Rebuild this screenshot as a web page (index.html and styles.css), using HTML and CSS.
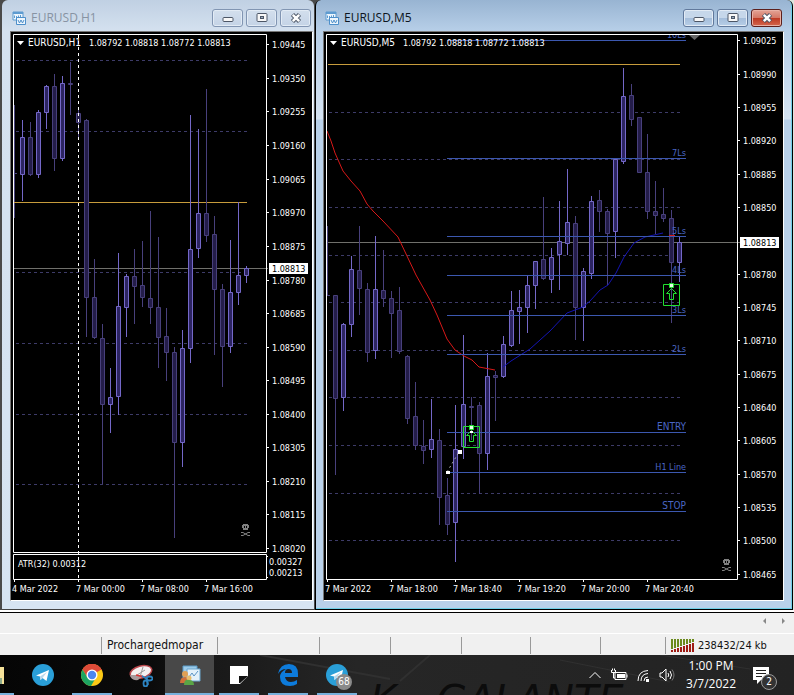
FILE: index.html
```html
<!DOCTYPE html>
<html lang="en">
<head>
<meta charset="utf-8">
<meta name="viewport" content="width=device-width, initial-scale=1">
<title>EURUSD charts</title>
<link rel="stylesheet" href="styles.css">
</head>
<body>
<svg class="defs" width="0" height="0" aria-hidden="true">
  <symbol id="chart-icon" viewBox="0 0 15 15">
    <path d="M1 1h10v8H1z" fill="#eef6fd" stroke="#5d9bd0"/>
    <path d="M1 1h10v2H1z" fill="#5d9bd0"/>
    <path d="M2.500 7V4.500M4.500 7.500V5M6.500 6V4.500M8.500 6V4" stroke="#5d9bd0"/>
    <path d="M4.500 6.500h9v7h-9z" fill="#eef6fd" stroke="#4d8fca"/>
    <path d="M6 9l1.500 3L9 9l1.500 3L12 9" fill="none" stroke="#4d8fca"/>
  </symbol>
  <symbol id="min-icon" viewBox="0 0 12 12"><rect x="1" y="5.500" width="10" height="4" rx="1" fill="#f8f8f8" stroke="#4c5666"/></symbol>
  <symbol id="max-icon" viewBox="0 0 12 12"><rect x="1" y="1.500" width="10" height="8" rx="1" fill="#f8f8f8" stroke="#4c5666"/><rect x="4.500" y="4.500" width="3" height="2" fill="#9ab" stroke="#4c5666"/></symbol>
  <symbol id="close-icon" viewBox="0 0 12 12"><path d="M2.500 2.500l7 7M9.500 2.500l-7 7" stroke="#4c5666" stroke-width="4.500"/><path d="M2.800 2.800l6.400 6.400M9.200 2.800l-6.400 6.400" stroke="#fff" stroke-width="2.500"/></symbol>
  <symbol id="skull" viewBox="0 0 9 13">
    <path class="bone" d="M2 0h5v1h1v3H7v2H2V4H1V1h1z"/><path class="socket" d="M3 2h1v2H3zM5 2h1v2H5z"/>
    <path class="bones" d="M0 8.500h2l5 3h2M9 8.500H7l-5 3H0"/>
  </symbol>
  <symbol id="plane" viewBox="0 0 24 24">
    <circle cx="12" cy="12" r="11" fill="#2a9fd8"/>
    <path d="M5 12.500L18 7l-2.500 11-4-3-2 2-.5-3.500z" fill="#fff"/><path d="M9 13.500L16 9l-4.500 6-2 2z" fill="#b9d9ec"/>
  </symbol>
</svg>

<main class="workspace">
  <section class="window" aria-label="EURUSD,H1">
    <header class="titlebar">
      <svg class="title-icon" aria-hidden="true"><use href="#chart-icon"/></svg>
      <h2 class="title">EURUSD,H1</h2>
      <button class="ctl" aria-label="Minimize"><svg><use href="#min-icon"/></svg></button>
      <button class="ctl" aria-label="Maximize"><svg><use href="#max-icon"/></svg></button>
      <button class="ctl" aria-label="Close"><svg><use href="#close-icon"/></svg></button>
    </header>
    <div class="client">
      <svg class="chart" id="h1" viewBox="11 32 301 568">
        <g id="h1-back"></g>
        <path class="wick-dim" d="M14.500 105v113M14 173.500h3"/>
        <path class="gold" d="M14 202.500h233"/>
        <path class="price-line" d="M14 268.500h254"/>
        <g id="h1-candles"></g>
        <path class="day" d="M78.500 35v544"/>
        <path class="frame" d="M13.500 34.500h253v518h-253zM13.500 554.500h253v25h-253zM14.500 580v2M78.500 580v2M142.500 580v2M206.500 580v2M267 556.500h1M267 577.500h1"/>
        <path d="M17 41h7l-3.500 4z" fill="#fff"/>
        <text class="caps" x="28" y="46">EURUSD,H1</text>
        <text x="89" y="46">1.08792 1.08818 1.08772 1.08813</text>
        <text x="18" y="567">ATR(32) 0.00312</text>
        <text x="269" y="565">0.00327</text>
        <text x="269" y="576">0.00213</text>
        <g id="h1-axis"></g>
        <use href="#skull" x="241" y="524" width="9" height="13"/>
      </svg>
    </div>
  </section>

  <section class="window active" aria-label="EURUSD,M5">
    <header class="titlebar">
      <svg class="title-icon" aria-hidden="true"><use href="#chart-icon"/></svg>
      <h2 class="title">EURUSD,M5</h2>
      <button class="ctl" aria-label="Minimize"><svg><use href="#min-icon"/></svg></button>
      <button class="ctl" aria-label="Maximize"><svg><use href="#max-icon"/></svg></button>
      <button class="ctl close" aria-label="Close"><svg><use href="#close-icon"/></svg></button>
    </header>
    <div class="client">
      <svg class="chart" id="m5" viewBox="324 32 459 568">
        <clipPath id="m5-area"><path d="M326 35h411v545H326z"/></clipPath>
        <g id="m5-back"></g>
        <path class="gold" d="M328 64.500h352"/>
        <path class="price-line" d="M327 242.500h413"/>
        <path class="wick-dim" d="M327.500 226v70M327 295.500h3"/>
        <g id="m5-candles"></g>
        <path class="ma-red" d="M327 131l4 10 4 12 8 18 8 10 9 10 7 13 6 7 10 10 15 16 9 19 9 19 14 25 7 15 10 24 8 11 9 6 8 4 7 7 16 3M669 235.500h6"/>
        <path class="ma-blue" d="M503 367l8-6 19-12 20-18 17-18 8-3 8-3 7-6 10-11 8-5 8-12 8-16 10-14 11-6 18-4"/>
        <path class="trend" d="M447 472l12-20"/>
        <g id="m5-levels" clip-path="url(#m5-area)"></g>
        <g class="signal">
          <path d="M663.500 284.500h16v21h-16zM671.500 288.500l5 5h-3v6h-4v-6h-3z"/>
          <path d="M463.500 426.500h16v21h-16zM471.500 430.500l5 5h-3v6h-4v-6h-3z"/>
          <path class="dot" d="M669.500 283.500h4v4h-4zM469.500 425.500h4v4h-4z"/>
          <path d="M458 450h4v4h-4zM446 471h4v3h-4zM470 431h3v2h-3z" fill="#fff" stroke="none"/>
        </g>
        <path class="frame" d="M326.500 34.500h411v545h-411zM327.500 580v2M391.500 580v2M455.500 580v2M519.500 580v2M583.500 580v2M647.500 580v2"/>
        <path d="M689 35h11l-5.500 5z" fill="#666"/>
        <path d="M330 41h7l-3.500 4z" fill="#fff"/>
        <text class="caps" x="341" y="46">EURUSD,M5</text>
        <text x="403" y="46">1.08792 1.08818 1.08772 1.08813</text>
        <g id="m5-axis"></g>
        <use href="#skull" x="722" y="559" width="9" height="13"/>
      </svg>
    </div>
  </section>
</main>

<div class="tabstrip">
  <button aria-label="Scroll left"><svg viewBox="0 0 5 8"><path d="M4 1v6L1 4z"/></svg></button>
  <button aria-label="Scroll right"><svg viewBox="0 0 5 8"><path d="M1 1v6l3-3z"/></svg></button>
</div>

<div class="statusbar">
  <span></span><span class="profile">Prochargedmopar</span><span></span><span></span><span></span><span></span><span></span><span></span>
  <span class="traffic">
    <svg viewBox="0 0 24 13" aria-hidden="true">
      <path d="M1 0v10M4 0v9M7 0v8M10 0v7M13 0v6M16 0v5M19 0v4M22 0v3" stroke="#6b8a1c" stroke-width="2"/>
      <path d="M1 11v2M4 10v3M7 9v4M10 8v5M13 7v6M16 6v7M19 5v8M22 4v9" stroke="#a01c14" stroke-width="2"/>
    </svg>238432/24 kb</span>
</div>

<footer class="taskbar">
  <svg class="wallpaper" viewBox="0 0 534 40" preserveAspectRatio="xMinYMin slice" aria-hidden="true">
    <path d="M0 0L130 24M170 0L140 26" stroke="#303030" fill="none" stroke-width="2"/>
    <path d="M300 5l110 22M400 0l90 14" stroke="#303030" fill="none"/>
    <text x="110" y="59">K</text><text x="176" y="59">GALANTE</text>
  </svg>
  <nav class="apps">
    <button class="app first open" aria-label="File Explorer"><svg viewBox="0 0 24 24"><path d="M12 4h6v17h-6z" fill="#f5e29a"/><path d="M12 15h4v6h-4z" fill="#8aa88a"/></svg></button>
    <button class="app" aria-label="Telegram"><svg><use href="#plane"/></svg></button>
    <button class="app open" aria-label="Chrome"><svg viewBox="0 0 24 24">
      <circle cx="12" cy="12" r="11" fill="#fbc916"/>
      <path d="M12 12L2.500 6.500A11 11 0 0 1 21.500 6.500z" fill="#dd4b39"/>
      <path d="M12 7h9.800A11 11 0 0 0 2.500 6.500l5 8z" fill="#dd4b39"/>
      <path d="M2.500 6.500A11 11 0 0 0 11 23l5-8.500-4 2-4.500-2z" fill="#1da462"/>
      <circle cx="12" cy="12" r="5.500" fill="#fff"/><circle cx="12" cy="12" r="4.200" fill="#4a86ee"/></svg></button>
    <button class="app" aria-label="Snipping Tool"><svg viewBox="0 0 24 24">
      <ellipse cx="12" cy="9" rx="11" ry="6" transform="rotate(-15 12 9)" fill="#f5f0f0" stroke="#b9474c" stroke-width="1.500"/>
      <path d="M1 12q1 6 8 5l5-5z" fill="#a89a9c"/><path d="M8 12l8-5M11 14l3-10" stroke="#999"/>
      <path d="M7 12l8 2" stroke="#d33" stroke-width="1.500"/>
      <g fill="none" stroke="#2c83c0" stroke-width="1.800"><ellipse cx="20.500" cy="15.500" rx="3" ry="2"/><ellipse cx="16.500" cy="20.500" rx="2" ry="3"/><path d="M13 13l5 3 1 6"/></g></svg></button>
    <button class="app open current" aria-label="MetaTrader"><svg viewBox="0 0 24 24">
      <path d="M5 3h14v12H5z" fill="#9ccbe9" stroke="#5a9cc8"/><path d="M9 6h13v12H9z" fill="#e3f1fa" stroke="#6ba7d0"/>
      <path d="M11 14l3-4 2 3 4-5" stroke="#5b94c4" fill="none"/>
      <circle cx="7" cy="11" r="3" fill="#e0a054"/><path d="M2 20q0-6 5-6t5 6z" fill="#d0703a"/>
      <circle cx="11" cy="15" r="2.500" fill="#e8bd6c"/><path d="M6 22q0-6 5-5 5 0 5 5z" fill="#5aa546"/></svg></button>
    <button class="app open" aria-label="Sticky Notes"><svg viewBox="0 0 24 24"><path d="M3 3h18v10l-8 8H3z" fill="#fff"/><path d="M12 21v-8h9z" fill="#111"/><path d="M3 20h10v1H3z" fill="#fff"/></svg></button>
    <button class="app open" aria-label="Edge"><svg viewBox="0 0 24 24"><path d="M2 11Q4 1 13 1q9 0 9 10v3H9q1 5 6 5 3 0 6-2v4q-3 2-7 2Q4 23 4 14q0-5 6-8Q5 6 2 11zM9 10h7q0-4-3.500-4T9 10z" fill="#0d7bdb" fill-rule="evenodd"/></svg></button>
    <button class="app open" aria-label="Telegram, 68 unread"><svg><use href="#plane"/></svg><span class="badge">68</span></button>
  </nav>
  <div class="tray">
    <button aria-label="Show hidden icons"><svg viewBox="0 0 18 16"><path d="M3.500 11L9 5.500l5.500 5.500"/></svg></button>
    <button aria-label="Battery"><svg viewBox="0 0 18 16"><path d="M5 5.500h11v7H5zM17 7.500v3M1.500 3v2.500h4V3M3.500 6v5H5M2.500 1.500v2M4.500 1.500v2"/><path d="M7 7h8v4H7z" fill="#fff" stroke="none"/></svg></button>
    <button aria-label="Network"><svg viewBox="0 0 18 16"><path d="M4 14Q4 4 14 3.500M7 14q0-7 7-7.500M10 14q0-4 4-4" /><path d="M12 12h3v3h-3z" fill="#fff" stroke="none"/></svg></button>
    <button aria-label="Volume"><svg viewBox="0 0 18 16"><path d="M2 6h2l4-4v12l-4-4H2zM10 6q1.500 2 0 4M12 4q3 4 0 8"/><path d="M14 2.500q4 5.500 0 11" stroke="#777"/></svg></button>
    <time class="clock" datetime="2022-03-07T13:00">1:00 PM<br>3/7/2022</time>
    <button class="notes" aria-label="Notifications, 2 new"><svg viewBox="0 0 18 18"><path d="M1 1h16v13h-8l-4 4v-4H1z" fill="#fff" stroke="none"/><path d="M4 4.500h10M4 7.500h10M4 10.500h6" stroke="#222"/></svg><span class="badge">2</span></button>
  </div>
</footer>
<script src="charts.js"></script>
</body>
</html>
```
FILE: styles.css
```css
* { box-sizing: border-box; }
body {
  margin: 0;
  min-height: 100vh;
  display: flex;
  flex-direction: column;
  background: #f0f0f0;
  font-family: "DejaVu Sans Condensed", "DejaVu Sans", sans-serif;
  font-size: 12px;
}
button { border: 0; padding: 0; margin: 0; background: none; font: inherit; color: inherit; }
.defs { position: absolute; }

.workspace {
  flex: 1;
  display: grid;
  grid-template-columns: 312fr 478fr;
  gap: 1px;
  align-items: start;
  padding: 0 1px 0 2px;
  background: linear-gradient(to right, #4a4a4a 50%, #dde5dd 50%);
  border-bottom: 1px solid #000;
  box-shadow: inset 0 -2px #fff;
}
.window {
  padding: 0 1px 8px 8px;
  border-radius: 6px 6px 0 0;
  background: linear-gradient(#c0d0e3, #d4e1ef 31px, #d7e4f2);
  border-bottom: 1px solid #444;
}
.window.active {
  padding: 0 8px 8px 7px;
  border: 1px solid #000;
  border-top: 0;
  background: linear-gradient(#98b4d2, #b7cfe8 31px, #d5e3f2 119px, #b9d1ea 120px);
  box-shadow: inset -1px -1px #6fd0e8;
}
.titlebar { display: flex; align-items: center; gap: 3px; height: 31px; padding: 5px 2px 0 2px; }
.title-icon { width: 15px; height: 15px; }
.title { flex: 1; margin: 0 0 0 1px; font: 400 12px/16px "Open Sans", sans-serif; color: #8793a3; }
.active .title { color: #0c1420; }
.ctl {
  width: 31px;
  height: 18px;
  display: grid;
  place-items: center;
  border: 1px solid #8195b2;
  border-radius: 3px;
  background: linear-gradient(#d3dfed, #c4d3e6);
  box-shadow: inset 0 0 0 1px #e2ebf5;
}
.active .ctl { border-color: #61799c; background: linear-gradient(#c6d7ea 50%, #a4bdda 50%, #b7cee7); }
.active .close { border-color: #5c1f1c; background: linear-gradient(#e4a496, #d47765 50%, #bd3822 50%, #d4674e); box-shadow: inset 0 0 0 1px #e9b1a5; }
.ctl svg { width: 12px; height: 12px; }
.client { border: 1px solid #fff; border-top-color: #777; border-left-color: #777; background: #000; }

.chart { display: block; width: 100%; height: auto; }
.chart text { font-size: 9px; fill: #fff; }
.chart .caps { font-size: 10px; }
.chart .level-text { fill: #4a66c4; text-anchor: end; }
.chart .tag-text { fill: #000; }
.frame, .gold, .price-line, .day, .wick-dim, .ma-red, .ma-blue, .trend, .level, .grid { fill: none; }
.frame { stroke: #fff; }
.grid { stroke: #3d3b68; stroke-dasharray: 3 3; }
.gold { stroke: #c79c3c; }
.price-line { stroke: #70706c; }
.day { stroke: #fff; stroke-dasharray: 3 3; }
.wick-dim { stroke: #4c4680; }
.up { stroke: #7468c8; }
.down { stroke: #48407c; }
.body-up { fill: #2c2462; }
.body-down { fill: #241d4a; }
.ma-red { stroke: #d81818; }
.ma-blue { stroke: #1414b4; }
.trend { stroke: #aaa; stroke-dasharray: 2 3; }
.level { stroke: #3c58b0; }
.signal { stroke: #22e030; fill: none; }
.dot { fill: #e8ffe8; }
.bone { fill: #808080; }
.socket { fill: #000; }
.bones { fill: none; stroke: #808080; }

.tabstrip { height: 20px; display: flex; justify-content: flex-end; align-items: center; gap: 14px; padding: 0 8px 4px 0; }
.tabstrip button { display: flex; }
.tabstrip svg { width: 5px; height: 8px; fill: #888; }

.statusbar {
  height: 22px;
  display: grid;
  grid-template-columns: 101fr 116fr 102fr 71fr 71fr 69fr 70fr 65fr 129fr;
  border-top: 1px solid #fff;
  line-height: 21px;
  color: #111;
}
.statusbar span + span { margin: 3px 0 1px; border-left: 1px solid #999; line-height: 16px; }
.statusbar .profile, .statusbar .traffic { padding-left: 5px; }
.statusbar .traffic { display: flex; align-items: center; gap: 3px; font-size: 11px; white-space: nowrap; }
.traffic svg { width: 24px; height: 13px; }

.taskbar {
  position: relative;
  height: 40px;
  display: flex;
  justify-content: space-between;
  overflow: hidden;
  background: linear-gradient(to right, #050505, #0b0b0b 19%, #191919 27%, #262626 45%, #232323);
  color: #fff;
}
.wallpaper { position: absolute; left: 260px; top: 0; width: calc(100% - 260px); height: 40px; }
.wallpaper text { font: italic 40px "DejaVu Sans", sans-serif; fill: #0c0c0c; }
.apps, .tray { position: relative; display: flex; }
.app { position: relative; width: 49px; height: 40px; display: grid; place-items: center; }
.app svg { width: 24px; height: 24px; }
.app.open::after { content: ""; position: absolute; left: 5px; right: 4px; bottom: 0; height: 2px; background: #76b0dc; }
.app.first { width: 18px; justify-content: end; }
.app.first svg { margin-right: 8px; }
.app.first.open::after { left: 0; }
.app.current { background: #484848; }
.app.current.open::after { left: 0; right: 0; }
.badge {
  position: absolute;
  right: 9px;
  bottom: 5px;
  width: 16px;
  height: 16px;
  border-radius: 8px;
  background: #8a8a8a;
  font-size: 10px;
  line-height: 16px;
  text-align: center;
}
.tray { align-items: center; gap: 6px; padding-right: 24px; }
.tray button { position: relative; display: flex; }
.tray svg { width: 18px; height: 16px; fill: none; stroke: #fff; }
.clock { margin: 0 10px 0 4px; font: 12px/18px "Open Sans", sans-serif; text-align: center; }
.tray .notes svg { height: 18px; }
.notes .badge { right: -7px; bottom: -6px; background: #333; border: 1px solid #999; line-height: 14px; }
```
FILE: charts.js
```js
// Candles: [high, open/close top, open/close bottom, low, rising], one per 8px step.
const h1 = [
  [120,137,174,201,1],[122,137,174,176,0],[110,112,174,178,1],[85,86,112,129,1],[74,86,158,171,0],
  [76,83,158,161,1],[62,83,84,115,0],[107,113,122,138,0],[119,120,297,337,0],[259,297,337,339,0],
  [324,338,404,484,0],[368,397,404,433,1],[253,306,396,415,1],[274,276,307,337,1],[249,276,286,324,0],
  [241,285,297,307,0],[211,298,307,324,0],[237,307,337,368,0],[308,336,352,381,0],[347,352,442,538,0],
  [330,348,442,467,1],[115,249,348,363,1],[129,213,248,258,1],[89,213,235,242,0],[216,234,289,355,0],
  [284,289,346,387,0],[240,292,346,353,1],[202,275,292,305,1],[266,268,275,283,1]
];
const m5 = [
  [295,295,398,475,0],[323,324,397,411,1],[256,269,324,337,1],[226,270,288,315,0],[283,289,352,362,0],
  [236,289,350,359,1],[250,290,298,307,0],[291,298,313,358,0],[287,310,351,354,0],[355,356,418,424,0],
  [382,416,445,450,0],[420,446,450,464,0],[399,439,449,458,1],[429,440,497,525,0],[478,495,524,535,0],
  [405,449,522,562,1],[335,404,446,459,1],[397,406,407,440,0],[402,405,453,494,0],[353,376,453,470,1],
  [371,375,377,421,0],[336,344,376,378,1],[291,310,345,347,1],[290,307,311,344,1],[275,285,307,333,1],
  [261,261,285,309,1],[197,259,278,280,0],[248,257,279,293,1],[201,241,254,290,1],[169,222,243,255,1],
  [216,223,307,340,0],[268,271,307,341,1],[196,201,273,279,1],[190,200,211,232,0],[209,211,233,285,0],
  [158,159,231,258,1],[68,96,161,164,1],[84,95,119,126,0],[117,117,172,172,0],[134,172,211,219,0],
  [181,211,215,234,0],[188,214,218,222,0],[210,218,262,323,0],[236,242,262,282,1]
];

function candles(list, x0) {
  return list.map(([hi, top, bot, lo, up], i) => {
    const x = x0 + i * 8, k = up ? "up" : "down";
    return `<path class="${k}" d="M${x + 0.5} ${hi}V${lo}"/>` +
      `<path class="${k} body-${k}" d="M${x - 1.5} ${top + 0.5}h4V${bot + 0.5}h-4z"/>`;
  }).join("");
}
function grid(ys, x1, x2) {
  return ys.map(y => `<path class="grid" d="M${x1} ${y + 0.5}H${x2}"/>`).join("");
}
function priceAxis(first, step, ys, x) {
  return ys.map((y, i) => y ? `<path class="frame" d="M${x} ${y + 0.5}h2"/>` +
    `<text x="${x + 5}" y="${y + 4}">${((first - i * step) / 100000).toFixed(5)}</text>` : "").join("");
}
function priceTag(x, y) {
  return `<rect x="${x}" y="${y - 5}" width="39" height="11" fill="#fff"/>` +
    `<text class="tag-text" x="${x + 3}" y="${y + 4}">1.08813</text>`;
}
function timeAxis(labels, x) {
  return labels.map((t, i) => `<text x="${x + i * 64}" y="592">${t}</text>`).join("");
}
const put = (id, html) => { document.getElementById(id).innerHTML = html; };

put("h1-back", grid([60, 131, 272, 343, 414, 484], 16, 247));
put("h1-candles", candles(h1, 22));
put("h1-axis",
  priceAxis(109445, 95, [44, 78, 111, 145, 179, 212, 246, 280, 313, 347, 380, 414, 447, 481, 514, 548], 267) +
  priceTag(269, 268) +
  timeAxis(["4 Mar 2022", "7 Mar 00:00", "7 Mar 08:00", "7 Mar 16:00"], 12));

put("m5-back", grid([112, 159, 207, 255, 302, 350, 397, 445, 493, 540], 329, 680));
put("m5-candles", candles(m5, 335));
put("m5-levels", [["10Ls", 40], ["7Ls", 158], ["5Ls", 236], ["4Ls", 275], ["3Ls", 315], ["2Ls", 354],
  ["ENTRY", 432, "caps"], ["H1 Line", 472], ["STOP", 511, "caps"]].map(([t, y, size = ""]) =>
  `<path class="level" d="M447 ${y + 0.5}H686"/><text class="level-text ${size}" x="686" y="${y - 2}">${t}</text>`).join(""));
put("m5-axis",
  priceAxis(109025, 35, [40, 74, 107, 140, 174, 207, 0, 274, 307, 340, 374, 407, 440, 474, 507, 540, 574], 738) +
  priceTag(740, 242) +
  timeAxis(["7 Mar 2022", "7 Mar 18:00", "7 Mar 18:40", "7 Mar 19:20", "7 Mar 20:00", "7 Mar 20:40"], 325));
```
